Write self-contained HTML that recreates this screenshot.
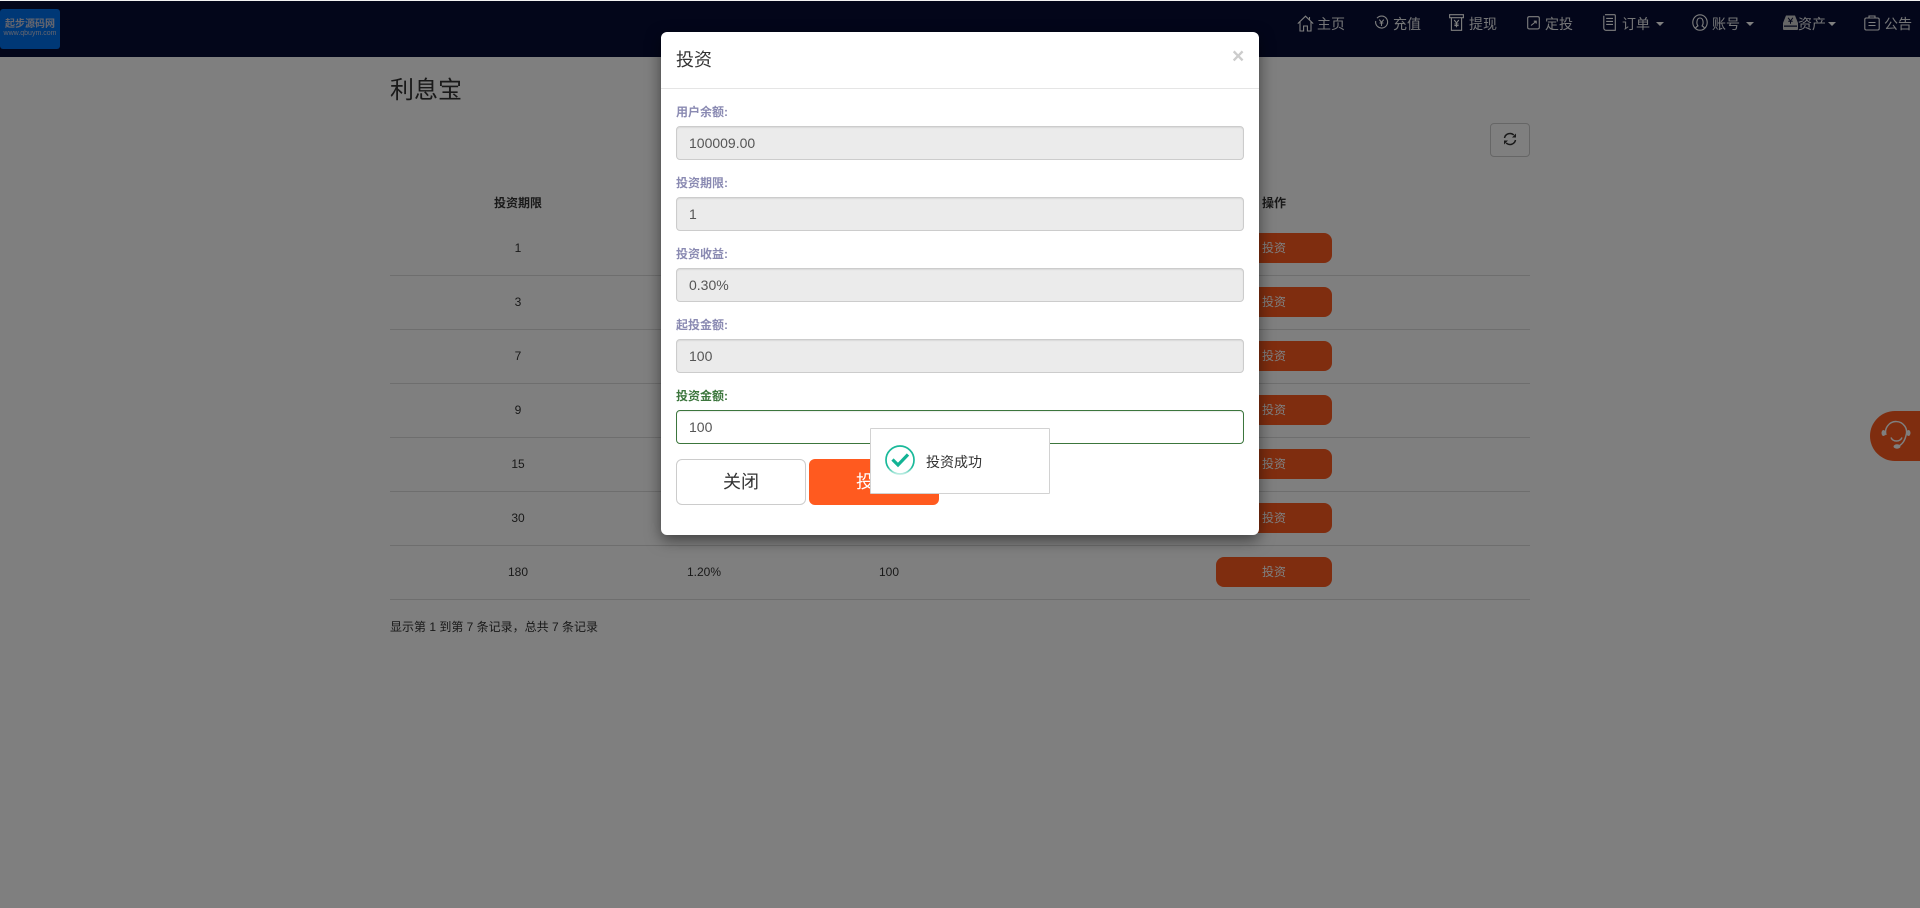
<!DOCTYPE html>
<html lang="zh">
<head>
<meta charset="utf-8">
<title>利息宝</title>
<style>
html,body{margin:0;padding:0;width:1920px;height:908px;overflow:hidden;background:#fff;}
body{position:relative;font-family:"Liberation Sans","Noto Sans CJK SC",sans-serif;font-size:14px;color:#333;}
.a{position:absolute;white-space:nowrap;}
svg{position:absolute;overflow:visible;display:block;}
#nav{position:absolute;left:0;top:1px;width:1920px;height:56px;background:#060c34;}
.n{position:absolute;top:14px;height:20px;line-height:20px;font-size:14px;color:#fff;opacity:.92;white-space:nowrap;}
.c{position:absolute;top:22px;width:0;height:0;border-left:4px solid transparent;border-right:4px solid transparent;border-top:4px solid #fff;}
.i{fill:none;stroke:#fff;stroke-width:1.1;}
#logo{position:absolute;left:0;top:9px;width:60px;height:40px;background:#0070ec;border-radius:3px;color:#ccd;text-align:center;}
.line{position:absolute;left:390px;width:1140px;height:1px;background:#ddd;}
.cell{position:absolute;height:18px;line-height:18px;font-size:12px;text-align:center;color:#333;}
.btn{position:absolute;left:1216px;width:116px;height:30px;line-height:30px;background:#ff5a1f;border-radius:8px;color:#fff;font-size:12px;text-align:center;}
#back{position:absolute;left:0;top:1px;width:1920px;height:907px;background:rgba(0,0,0,.5);}
#modal{position:absolute;left:661px;top:32px;width:598px;height:503px;background:#fff;border-radius:6px;box-shadow:0 5px 15px rgba(0,0,0,.5);}
.lb{position:absolute;left:676px;height:17px;line-height:17px;font-size:12px;font-weight:bold;color:#8a8ab2;white-space:nowrap;}
.ip{position:absolute;left:676px;width:566px;height:32px;line-height:32px;border:1px solid #ccc;border-radius:4px;background:#ebebeb;color:#555;font-size:14px;padding:0;text-indent:12px;box-shadow:inset 0 1px 1px rgba(0,0,0,.075);}
</style>
</head>
<body>

<div id="nav"></div>
<div id="logo">
  <div class="a" style="left:0;width:60px;top:10px;line-height:12px;font-size:10px;font-weight:bold;">起步源码网</div>
  <div class="a" style="left:0;width:60px;top:20px;line-height:9px;font-size:7px;">www.qbuym.com</div>
</div>

<!-- nav icons -->
<svg style="left:1297px;top:15px" width="17" height="17" viewBox="0 0 17 17"><path class="i" d="M.8 8.6 8.5 1.2l7.7 7.4M3 7v9h3.6v-5h3.8v5H14V7M12.5 2v2.6"/></svg>
<div class="n" style="left:1317px">主页</div>

<svg style="left:1375px;top:16px" width="13" height="13" viewBox="0 0 13 13"><path class="i" d="M2 2.2A6 6 0 1 1 .7 5"/><path class="i" stroke-width="1" d="M4.3 3.6 6.5 6.3l2.2-2.7M6.5 6.3V10M4.6 7h3.8"/></svg>
<div class="n" style="left:1393px">充值</div>

<svg style="left:1449px;top:14px" width="15" height="17" viewBox="0 0 15 17"><path class="i" d="M.6.7h13.8v3H.6zM2.4 3.7v12.6h10.2V3.7"/><path class="i" stroke-width="1" d="M5.2 6 7.5 9l2.3-3M7.5 9v4.2M5.4 10h4.2M5.4 11.6h4.2"/></svg>
<div class="n" style="left:1469px">提现</div>

<svg style="left:1527px;top:16px" width="13" height="14" viewBox="0 0 13 14"><rect class="i" x=".7" y=".7" width="11.6" height="12.2" rx="1.5"/><path class="i" d="M4 9.500 9 5.500M6.800 5.200H9.200v2.400"/></svg>
<div class="n" style="left:1545px">定投</div>

<svg style="left:1603px;top:14px" width="13" height="17" viewBox="0 0 13 17"><path class="i" d="M2 .7h9.300a1 1 0 0 1 1 1V16.300H3A2.200 2.200 0 0 1 .8 14V1.700M3.200 4.400h6.800M3.200 7.400h6.800M3.200 10.400h6.800"/></svg>
<div class="n" style="left:1622px">订单</div>
<div class="c" style="left:1656px"></div>

<svg style="left:1692px;top:14px" width="16" height="17" viewBox="0 0 16 17"><ellipse class="i" cx="8" cy="8.500" rx="7.200" ry="7.700"/><path class="i" d="M5.800 11.500C4.400 9.800 4.400 4 8 4s3.600 5.800 2.200 7.500M3.600 14c1-1.600 1.800-1.800 2.800-2.400M12.400 14c-1-1.600-1.800-1.800-2.800-2.400"/></svg>
<div class="n" style="left:1712px">账号</div>
<div class="c" style="left:1746px"></div>

<svg style="left:1783px;top:15px" width="15" height="15" viewBox="0 0 15 15"><path fill="#ccc" d="M3 .5h9L15 8v6a1 1 0 0 1-1 1H1a1 1 0 0 1-1-1V8z"/><path fill="#060c34" d="M1 10.500h13v1.200H1zM5.500 2.500l2 2.600 2-2.600.8.500-2 2.800h1.400v1H8v2H7v-2H5.300v-1h1.400l-2-2.800z"/></svg>
<div class="n" style="left:1798px">资产</div>
<div class="c" style="left:1828px"></div>

<svg style="left:1864px;top:15px" width="16" height="16" viewBox="0 0 16 16"><rect class="i" x=".8" y="3" width="14.400" height="12" rx="1.500"/><path class="i" d="M5 3V1h6v2M4.500 7.500h7M4.500 10.500h7"/></svg>
<div class="n" style="left:1884px">公告</div>

<!-- page -->
<div class="a" style="left:390px;top:74px;height:34px;line-height:34px;font-size:24px;color:#333;">利息宝</div>

<div class="a" style="left:1490px;top:123px;width:38px;height:32px;border:1px solid #ccc;border-radius:4px;"></div>
<svg style="left:1503px;top:132px" width="14" height="14" viewBox="0 0 14 14">
  <path fill="none" stroke="#333" stroke-width="1.500" d="M1.500 6A5.600 5.600 0 0 1 10.800 3"/>
  <path fill="#333" d="M13 1.500V5.500H9z"/>
  <path fill="none" stroke="#333" stroke-width="1.500" d="M12.500 8A5.600 5.600 0 0 1 3.200 11"/>
  <path fill="#333" d="M1 12.500V8.500h4z"/>
</svg>

<div class="cell" style="left:468px;width:100px;top:194px;font-weight:bold;">投资期限</div>
<div class="cell" style="left:1224px;width:100px;top:194px;font-weight:bold;">操作</div>

<div class="line" style="top:275px"></div>
<div class="line" style="top:329px"></div>
<div class="line" style="top:383px"></div>
<div class="line" style="top:437px"></div>
<div class="line" style="top:491px"></div>
<div class="line" style="top:545px"></div>
<div class="line" style="top:599px"></div>

<div class="cell" style="left:468px;width:100px;top:239px">1</div>
<div class="cell" style="left:468px;width:100px;top:293px">3</div>
<div class="cell" style="left:468px;width:100px;top:347px">7</div>
<div class="cell" style="left:468px;width:100px;top:401px">9</div>
<div class="cell" style="left:468px;width:100px;top:455px">15</div>
<div class="cell" style="left:468px;width:100px;top:509px">30</div>
<div class="cell" style="left:468px;width:100px;top:563px">180</div>
<div class="cell" style="left:654px;width:100px;top:563px">1.20%</div>
<div class="cell" style="left:839px;width:100px;top:563px">100</div>

<div class="btn" style="top:233px">投资</div>
<div class="btn" style="top:287px">投资</div>
<div class="btn" style="top:341px">投资</div>
<div class="btn" style="top:395px">投资</div>
<div class="btn" style="top:449px">投资</div>
<div class="btn" style="top:503px">投资</div>
<div class="btn" style="top:557px">投资</div>

<div class="a" style="left:390px;top:618px;height:18px;line-height:18px;font-size:12px;color:#333;">显示第 1 到第 7 条记录，总共 7 条记录</div>

<!-- support bubble -->
<div class="a" style="left:1870px;top:411px;width:50px;height:50px;background:#ff5a1f;border-radius:25px 0 0 25px;"></div>
<svg style="left:1881px;top:421px" width="30" height="29" viewBox="0 0 30 29">
  <path fill="none" stroke="#fff" stroke-width="1.500" d="M5 14A10.500 10.500 0 1 1 25 14.500C24 19 21.500 23 18 25"/>
  <path fill="none" stroke="#fff" stroke-width="1.500" d="M10 16.500c1 2.500 3 3.500 5.500 3.500s4.500-1 5.500-3.500"/>
  <ellipse cx="2.500" cy="12" rx="2" ry="3" fill="#fff"/>
  <ellipse cx="27.500" cy="12" rx="2" ry="3" fill="#fff"/>
  <ellipse cx="16" cy="25.500" rx="3.500" ry="2.200" fill="#fff"/>
</svg>

<div id="back"></div>

<!-- modal -->
<div id="modal"></div>
<div class="a" style="left:676px;top:47px;height:26px;line-height:26px;font-size:18px;color:#333;">投资</div>
<div class="a" style="left:1232px;top:45px;height:24px;line-height:24px;font-size:21px;font-weight:bold;color:#ccc;">×</div>
<div class="a" style="left:661px;top:88px;width:598px;height:1px;background:#e5e5e5;"></div>

<div class="lb" style="top:104px">用户余额:</div>
<div class="ip" style="top:126px">100009.00</div>
<div class="lb" style="top:175px">投资期限:</div>
<div class="ip" style="top:197px">1</div>
<div class="lb" style="top:246px">投资收益:</div>
<div class="ip" style="top:268px">0.30%</div>
<div class="lb" style="top:317px">起投金额:</div>
<div class="ip" style="top:339px">100</div>
<div class="lb" style="top:388px;color:#3c763d">投资金额:</div>
<div class="ip" style="top:410px;background:#fff;border-color:#3c763d;">100</div>

<div class="a" style="left:676px;top:459px;width:128px;height:44px;line-height:44px;border:1px solid #ccc;border-radius:6px;background:#fff;color:#333;font-size:18px;text-align:center;">关闭</div>
<div class="a" style="left:809px;top:459px;width:130px;height:46px;line-height:46px;border-radius:6px;background:#ff5a1f;color:#fff;font-size:18px;text-align:center;">投资</div>

<!-- toast -->
<div class="a" style="left:870px;top:428px;width:178px;height:64px;background:#fff;border:1px solid #d2d2d2;border-radius:1px;"></div>
<svg style="left:885px;top:445px" width="30" height="30" viewBox="0 0 30 30">
  <defs><linearGradient id="g" x1="0" y1="0" x2="0" y2="1"><stop offset="0" stop-color="#1ab99a"/><stop offset=".75" stop-color="#1ab99a"/><stop offset="1" stop-color="#bfeee4"/></linearGradient></defs>
  <circle cx="15" cy="15" r="14" fill="none" stroke="url(#g)" stroke-width="1.700"/>
  <path fill="none" stroke="#12b394" stroke-width="3.200" d="M7.500 14.500 13 20 23 9.500"/>
</svg>
<div class="a" style="left:926px;top:452px;height:20px;line-height:20px;font-size:14px;color:#333;">投资成功</div>

<div class="a" style="left:0;top:0;width:1920px;height:1px;background:#f2f2f2;"></div>
</body>
</html>
